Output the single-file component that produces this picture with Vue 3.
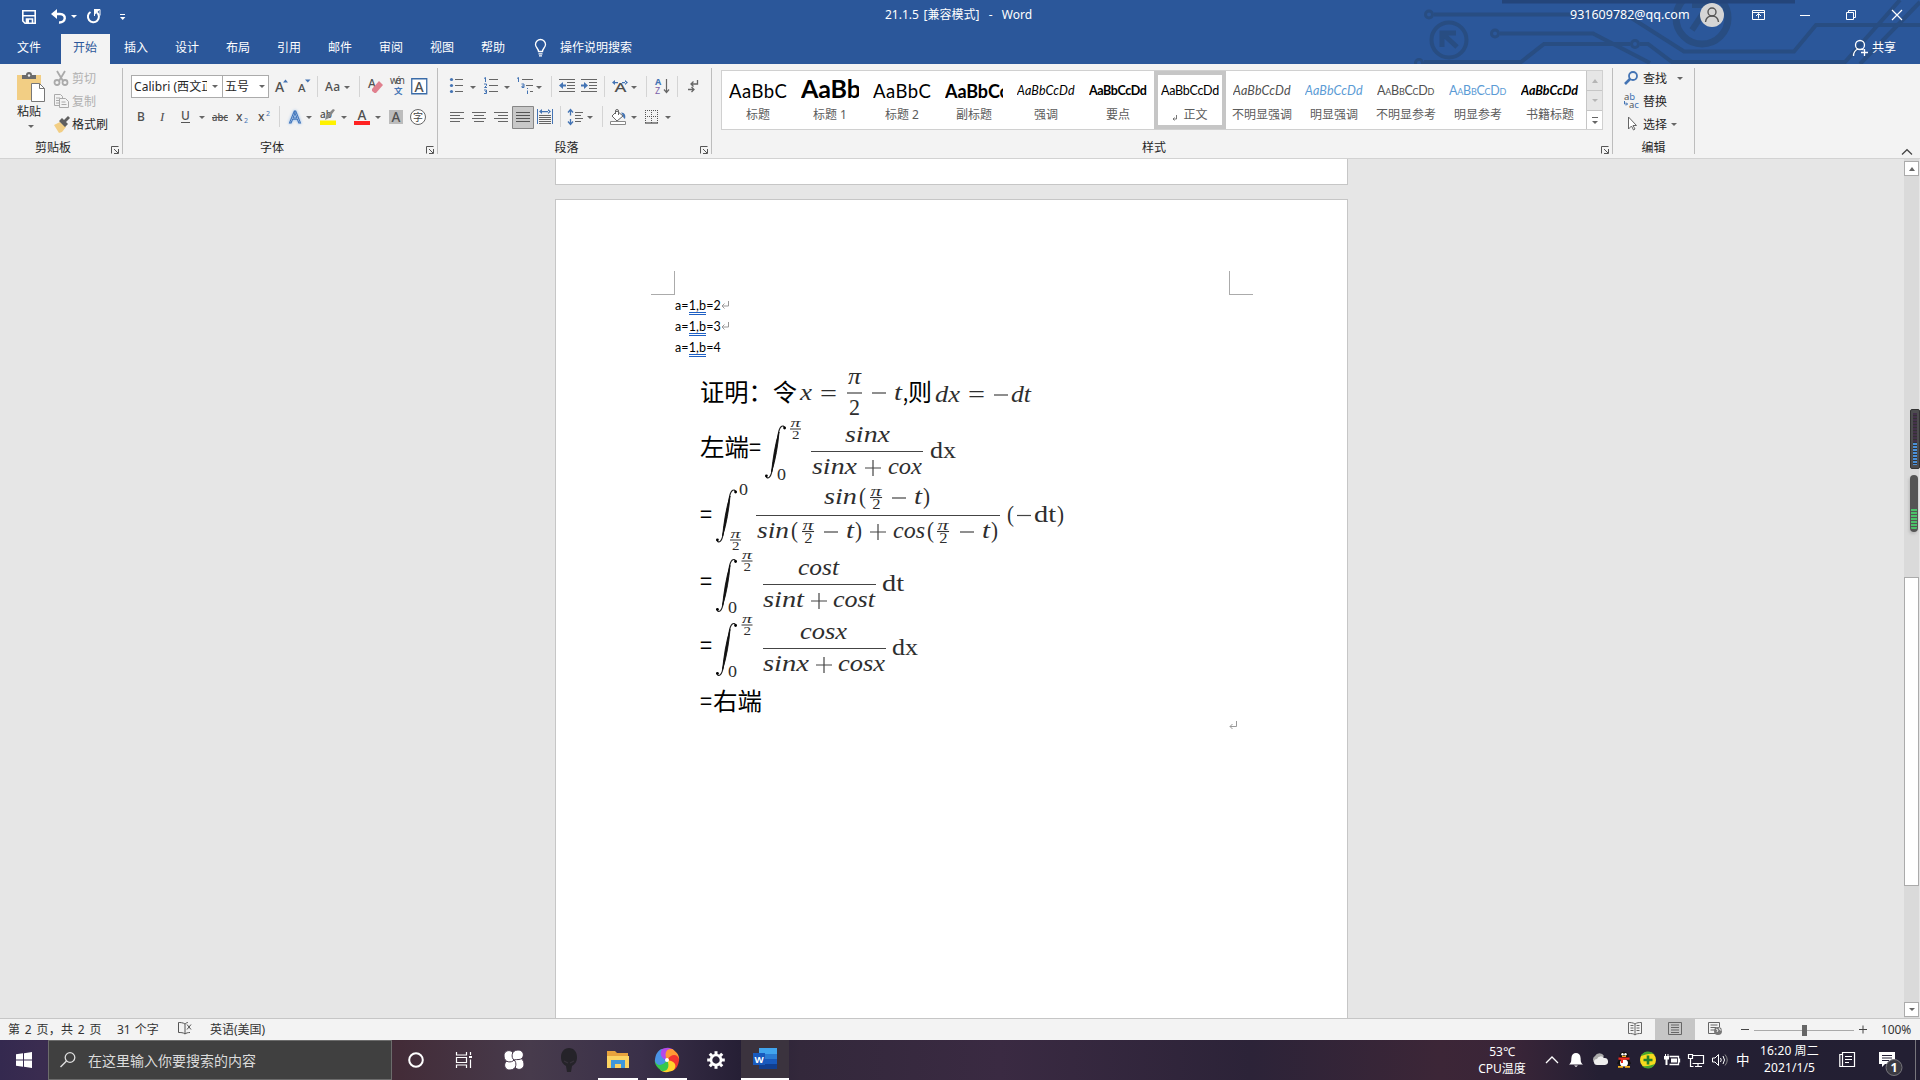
<script setup>
const tabs = ['开始', '插入', '设计', '布局', '引用', '邮件', '审阅', '视图', '帮助']

const styles = [
  { s: 'AaBbC', n: '标题', c: 'lg' },
  { s: 'AaBb', n: '标题 1', c: 'xl b' },
  { s: 'AaBbC', n: '标题 2', c: 'lg' },
  { s: 'AaBbCc', n: '副标题', c: 'lg b' },
  { s: 'AaBbCcDd', n: '强调', c: 'it' },
  { s: 'AaBbCcDd', n: '要点', c: 'b sm' },
  { s: 'AaBbCcDd', n: '正文', c: '', on: true },
  { s: 'AaBbCcDd', n: '不明显强调', c: 'it gray' },
  { s: 'AaBbCcDd', n: '明显强调', c: 'it blue' },
  { s: 'AaBbCcDdE', n: '不明显参考', c: 'caps gray' },
  { s: 'AaBbCcDd', n: '明显参考', c: 'caps blue' },
  { s: 'AaBbCcDd', n: '书籍标题', c: 'it b sm' },
]

const lines = ['2', '3', '4']

// Formula runs: x, baseline, width, text, font class
const runs = [
  [700, 401, 97, '证明：令', 'cj'],
  [800, 400, 12, 'x', 'mi'], [820, 401, 17, '=', 'mr'],
  [848, 384, 13, 'π', 'mi'], [849, 415, 11, '2', 'mr'],
  [894, 400, 8, 't', 'mi'], [903, 401, 5, ',', 'cj'], [908, 401, 24, '则', 'cj'],
  [935, 402, 25, 'dx', 'mi'], [968, 402, 17, '=', 'mr'], [1011, 402, 20, 'dt', 'mi'],
  [700, 456, 49, '左端', 'cj'], [749, 456, 12, '=', 'cj'],
  [777, 480, 9, '0', 'ms'],
  [845, 442, 45, 'sinx', 'mi'], [812, 474, 45, 'sinx', 'mi'], [888, 474, 34, 'cox', 'mi'],
  [930, 458, 26, 'dx', 'mr'],
  [700, 523, 12, '=', 'cj'], [739, 495, 9, '0', 'ms'],
  [824, 504, 33, 'sin', 'mi'], [859, 504, 7, '(', 'mp'], [914, 504, 8, 't', 'mi'], [923, 504, 7, ')', 'mp'],
  [757, 538, 32, 'sin', 'mi'], [791, 538, 7, '(', 'mp'], [846, 538, 8, 't', 'mi'], [855, 538, 7, ')', 'mp'],
  [893, 538, 32, 'cos', 'mi'], [927, 538, 7, '(', 'mp'], [982, 538, 8, 't', 'mi'], [991, 538, 7, ')', 'mp'],
  [1007, 522, 7, '(', 'mp'], [1034, 522, 22, 'dt', 'mr'], [1057, 522, 7, ')', 'mp'],
  [700, 589.5, 12, '=', 'cj'], [728, 613, 9, '0', 'ms'],
  [798, 575, 41, 'cost', 'mi'], [763, 607, 41, 'sint', 'mi'], [833, 607, 42, 'cost', 'mi'],
  [882, 591, 22, 'dt', 'mr'],
  [700, 653.5, 12, '=', 'cj'], [728, 677, 9, '0', 'ms'],
  [800, 639, 47, 'cosx', 'mi'], [763, 671, 46, 'sinx', 'mi'], [838, 671, 47, 'cosx', 'mi'],
  [892, 655, 26, 'dx', 'mr'],
  [700, 710, 12, '=', 'cj'], [713, 710, 49, '右端', 'cj'],
]
// Horizontal strokes: x, y, width
const bars = [
  [847, 393, 15], [872, 393, 14], [994, 395, 14],
  [811, 451.5, 112], [756, 515.5, 244], [763, 584.5, 113], [763, 648.5, 123],
  [892, 498, 14], [824, 532, 14], [960, 532, 14], [1017, 515.5, 14],
]
const pluses = [[873, 468], [878, 532], [819, 601], [824, 665]]
const integrals = [[765, 425], [716, 489], [716, 558.5], [716, 622.5]]
// Small pi/2 fractions: x, bar y, scale
const halves = [
  [790, 429, 1], [730, 540, 1], [741.5, 561, 1], [741.5, 625, 1],
  [870, 497.5, 1.1], [802, 531.5, 1.1], [937, 531.5, 1.1],
]
</script>

<template>
  <div class="screen">
    <header class="top">
      <svg class="circuit" width="520" height="64" fill="none" stroke="#284d82" stroke-width="4">
        <circle cx="29" cy="14.500" r="3.500" stroke-width="3" /><path d="M34 14.500H226L284 51.500H394L416 25H520" />
        <circle cx="49" cy="40" r="17.500" /><path d="M42 47V33H56M43 34l14 13" stroke-width="5" />
        <circle cx="95" cy="33.500" r="3.500" stroke-width="3" /><path d="M100 33.500H193L250 63" />
        <circle cx="19" cy="63" r="3.500" stroke-width="3" /><path d="M24 62H121L144 44H230" />
        <circle cx="235" cy="44" r="3.500" stroke-width="3" /><path d="M240 44H248L272 62H445L500 0M460 64L520 2" />
        <circle cx="302" cy="18" r="26" stroke-width="7" /><path d="M292 5H308V20M308 6l-16 24" stroke-width="6" />
        <path d="M102 1H395" stroke="#24457a" stroke-width="5" />
      </svg>
      <div class="titlebar">
        <div class="qat">
          <svg><path d="M.8 10.800h12.400v12.400H3l-2.200-2.200z" fill="none" stroke="#fff" stroke-width="1.600" /><path d="M1 15.800h12M4.500 23.500V19h6v4.500" fill="none" stroke="#fff" stroke-width="1.600" /><path d="M4 19h3v4H4z" fill="#fff" /></svg>
          <svg><path d="M2 14h7c7 0 6 9-1 8.500" fill="none" stroke="#fff" stroke-width="2.400" /><path d="M0 14l6-5v10z" fill="#fff" /></svg>
          <i class="caret w"></i>
          <svg><path d="M3.500 12a5.500 5.500 0 1 0 6.500.5" fill="none" stroke="#fff" stroke-width="2" /><path d="M7 9.500h6v6M7.500 10v6" fill="none" stroke="#fff" stroke-width="1" /><path d="M7 10h5.500L7 15.500z" fill="#fff" /></svg>
          <svg><path d="M0 14.500h5" stroke="#fff" /><path d="M0 17h5.400L2.700 20z" fill="#fff" /></svg>
        </div>
        <div class="title">21.1.5 [兼容模式]&nbsp; -&nbsp; Word</div>
        <div class="account">
          <span class="mail">931609782@qq.com</span>
          <svg><circle cx="12" cy="15" r="12" fill="#d5d5d5" /><g fill="none" stroke="#555" stroke-width="1.400"><circle cx="12" cy="12" r="4" /><path d="M5.500 22c1-8 12-8 13 0" /></g></svg>
          <svg><path d="M.5 10.500h12v9H.5zM.5 12.500h12M6.500 18.500v-5M4 16l2.500-2.500L9 16" fill="none" stroke="#fff" /></svg>
          <svg><path d="M0 15.500h10" stroke="#fff" /></svg>
          <svg><path d="M.5 12.500h7v7h-7zM2.500 12.500v-2h7v7h-2" fill="none" stroke="#fff" /></svg>
          <svg><path d="M0 10l10 10M10 10L0 20" stroke="#fff" stroke-width="1.200" /></svg>
        </div>
      </div>
      <nav class="tabs">
        <span class="file">文件</span>
        <span v-for="(t, i) in tabs" :key="t" class="tab" :class="{ on: i === 0 }">{{ t }}</span>
        <svg class="bulb"><g fill="none" stroke="#fff" stroke-width="1.300"><path d="M3.500 18.500c0-3-3-4-3-7a5 5 0 0 1 10 0c0 3-3 4-3 7zM3.500 20.800h4M4 22.800h3" /></g></svg>
        <span class="tell">操作说明搜索</span>
        <svg class="shareicon"><g fill="none" stroke="#fff" stroke-width="1.300"><circle cx="7" cy="12" r="4.500" /><path d="M.5 23c0-4 2-6 4.500-7M8.500 16l2 1M8 19.500h7M11.500 16v7" /></g></svg>
        <span class="share">共享</span>
      </nav>
    </header>

    <section class="ribbon">
      <div class="group clip">
        <div class="body cols">
          <div class="paste">
            <svg width="29" height="31"><path d="M0 3h24v25H0z" fill="#f2ce84" /><path d="M5 3h4a3 3 0 0 1 6 0h4v4H5z" fill="#6b6b6b" /><circle cx="12" cy="3.500" r="1.200" fill="#f3f3f3" /><path d="M14.500 11.500h8l5 5v13h-13z" fill="#fff" stroke="#777" /><path d="M22.500 11.500v5h5" fill="none" stroke="#777" /></svg>
            <span>粘贴</span>
            <i class="caret"></i>
          </div>
          <div class="cmds">
            <div class="cmd off"><svg><g fill="none" stroke="#aaa" stroke-width="1.800"><path d="M4 4l6 10M12 4L6 14" /><circle cx="4" cy="15.500" r="2.500" /><circle cx="12" cy="15.500" r="2.500" /></g></svg>剪切</div>
            <div class="cmd off"><svg><g fill="#f3f3f3" stroke="#aaa"><path d="M1.500 4.500h6l2 2v9h-8zM3 8h4M3 10.500h4M3 13h4" /><path d="M6.500 8.500h6l3 3v6h-9zM8.500 12h4M8.500 14.500h5" /></g></svg>复制</div>
            <div class="cmd"><svg><path d="M1 12l6-3 6 5-4 5-3 1z" fill="#f2ce84" /><path d="M6 8l3-3 2 2 4-4 2 2-4 4 2 2-3 3z" fill="#5f5f5f" /></svg>格式刷</div>
          </div>
        </div>
        <div class="foot"><span>剪贴板</span><svg class="launch"><path d="M.5 7.500v-7h7M3 3l4 4M7.500 3v4.500H3" fill="none" stroke="#555" /></svg></div>
      </div>
      <div class="sep"></div>

      <div class="group font">
        <div class="body">
          <div class="row f1">
            <div class="combo"><span>Calibri (西文正</span><i class="caret"></i></div>
            <div class="combo size"><span>五号</span><i class="caret"></i></div>
            <svg><text x="0" y="17" class="ic" font-size="14">A</text><path d="M8 7.500l2.500-3 2.500 3z" fill="#4474b4" /></svg>
            <svg><text x="0" y="17" class="ic" font-size="11.500">A</text><path d="M7 4.500h5.500l-2.700 3z" fill="#4474b4" /></svg>
            <b class="line"></b>
            <svg><text x="0" y="16" class="ic" font-size="12" textLength="15">Aa</text></svg>
            <i class="caret"></i>
            <b class="line"></b>
            <svg><text x="0" y="13" class="ic" font-size="12">A</text><path d="M4 14l7-8 4 4-7 8H6.500l-2.500-2z" fill="#e0808e" /></svg>
            <svg><text x="0" y="9" class="ic n" font-size="10" textLength="15">wén</text><text x="4" y="19" font-size="8.500" fill="#4474b4" font-weight="700">文</text></svg>
            <svg><path d="M.75 3.750h15v15h-15z" fill="#fff" stroke="#3b6ca8" stroke-width="1.300" /><text x="3.500" y="16.500" class="ic" font-size="14">A</text></svg>
          </div>
          <div class="row f2">
            <svg><text x="-1" y="16" class="ic" font-size="12" font-weight="700">B</text></svg>
            <svg><text x="0" y="16" class="ic" font-size="13" font-style="italic" font-family="Liberation Serif" font-weight="700">I</text></svg>
            <svg><text x="0" y="15" class="ic" font-size="12" font-weight="700">U</text><path d="M0 17.500h9" stroke="#555" /></svg>
            <i class="caret"></i>
            <svg><text x="0" y="16" class="ic" font-size="10.500" textLength="16" lengthAdjust="spacingAndGlyphs">abc</text><path d="M0 12.500h16" stroke="#555" /></svg>
            <svg><text x="0" y="16" class="ic" font-size="12" font-weight="700">x</text><text x="8" y="18" font-size="7" fill="#4474b4">2</text></svg>
            <svg><text x="0" y="16" class="ic" font-size="12" font-weight="700">x</text><text x="8" y="11" font-size="7" fill="#4474b4">2</text></svg>
            <b class="line"></b>
            <svg class="glow"><text x="1.500" y="17.500" font-size="16" textLength="11" lengthAdjust="spacingAndGlyphs">A</text></svg>
            <i class="caret"></i>
            <svg><text x="0" y="13" class="ic" font-size="10">ab</text><path d="M15 5l-6 8-4 2 1-4 7-7z" fill="#888" /><path d="M0 15.500h16v4.500H0z" fill="#fff200" /></svg>
            <i class="caret"></i>
            <svg><text x="3.500" y="15" class="ic" font-size="13.500">A</text><path d="M0 16h16v4H0z" fill="#f22" /></svg>
            <i class="caret"></i>
            <svg><path d="M0 5h14v14H0z" fill="#bcbcbc" /><text x="2.500" y="16.500" class="ic" font-size="13.500">A</text></svg>
            <svg><circle cx="8" cy="12" r="7.500" fill="#fff" stroke="#666" /><text x="3" y="15.500" font-size="10" fill="#444">字</text></svg>
          </div>
        </div>
        <div class="foot"><span>字体</span><svg class="launch"><path d="M.5 7.500v-7h7M3 3l4 4M7.500 3v4.500H3" fill="none" stroke="#555" /></svg></div>
      </div>
      <div class="sep"></div>

      <div class="group para">
        <div class="body">
          <div class="row p1">
            <svg><path d="M5 4.500h8M5 10.500h8M5 16.500h8" stroke="#666" /><g fill="#4474b4"><circle cx="1.500" cy="4.500" r="1.600" /><circle cx="1.500" cy="10.500" r="1.600" /><circle cx="1.500" cy="16.500" r="1.600" /></g></svg>
            <i class="caret"></i>
            <svg><path d="M5 4.500h9M5 10.500h9M5 16.500h9" stroke="#666" /><path d="M0 3.500l1.500-1V7M0 9h2.500v1.500L.5 12.500h2.500M0 15h2.500v3.500H0M1 16.700h1.500" fill="none" stroke="#4474b4" /></svg>
            <i class="caret"></i>
            <svg><path d="M5 4.500h11M9 10.500h7M13 16.500h3" stroke="#666" /><path d="M0 3.500l1.500-1V7M4.500 9h2.500v3.500h-2v-1.500h2M10.500 15.500v3.500M10.500 13v1" fill="none" stroke="#4474b4" /></svg>
            <i class="caret"></i>
            <b class="line"></b>
            <svg><path d="M0 4.500h16M8 7.500h8M8 10.500h8M8 13.500h8M0 16.500h16" stroke="#666" /><path d="M0 10.500l4-3.500v2.500h3v2H4V14z" fill="#4474b4" /></svg>
            <svg><path d="M0 4.500h16M8 7.500h8M8 10.500h8M8 13.500h8M0 16.500h16" stroke="#666" /><path d="M7 10.500L3 7v2.500H0v2h3V14z" fill="#4474b4" /></svg>
            <b class="line"></b>
            <svg><text x="2.500" y="17" class="ic" font-size="12" textLength="12" lengthAdjust="spacingAndGlyphs" font-weight="700">A</text><path d="M0 7.500L3 5v5zM16 7.500L13 5v5zM2 7h4v1.200H2zM10 7h4v1.200h-4z" fill="#4474b4" /></svg>
            <i class="caret"></i>
            <b class="line"></b>
            <svg><text y="9.500" font-size="9" font-weight="700" fill="#4474b4">A</text><text y="18.500" font-size="9" fill="#7c5fa8">Z</text><path d="M11.500 4v13M9 14.500l2.500 3 2.500-3" fill="none" stroke="#666" stroke-width="1.200" /></svg>
            <b class="line"></b>
            <svg><path d="M9.500 5v4H3M5.500 6.500L3 9l2.500 2.500M0 14.500h6M3.500 12l2.500 2.500L3.500 17" fill="none" stroke="#666" stroke-width="1.300" /></svg>
          </div>
          <div class="row p2">
            <svg><path d="M0 7.500h14M0 10.500h10M0 13.500h14M0 16.500h10" stroke="#666" /></svg>
            <svg><path d="M0 7.500h14M2 10.500h10M0 13.500h14M2 16.500h10" stroke="#666" /></svg>
            <svg><path d="M0 7.500h14M4 10.500h10M0 13.500h14M4 16.500h10" stroke="#666" /></svg>
            <svg><path d="M.5 1.500h21v22H.5z" fill="#c8c8c8" stroke="#868686" /><path d="M4 7.500h14M4 10.500h14M4 13.500h14M4 16.500h14" stroke="#555" /></svg>
            <svg><path d="M.5 4v15M15.500 4v15" stroke="#4474b4" /><path d="M2 6.500l3-2.500v5zM14 6.500L11 4v5zM4 6h8v1.200H4z" fill="#4474b4" /><path d="M2 10.500h12M2 12.500h12M2 14.500h12M2 16.500h12M2 18.500h12" stroke="#666" /></svg>
            <b class="line"></b>
            <svg><path d="M2.500 5.500v5M2.500 14v5M0 7.500l2.500-3 2.500 3M0 16.500l2.500 3 2.500-3" fill="none" stroke="#4474b4" stroke-width="1.300" /><path d="M7 7.500h8M7 10.500h6M7 13.500h8M7 16.500h6" stroke="#666" /></svg>
            <i class="caret"></i>
            <b class="line"></b>
            <svg><path d="M2 11l5-5 6 5-6 5z" fill="#fff" stroke="#666" /><path d="M5.500 9V6a1.500 1.500 0 0 1 3 0v4" fill="none" stroke="#666" /><path d="M11 7.500c4 0 5 3 4 6.500-1.500-1-2-2-2-3.500z" fill="#4474b4" /><path d="M.5 16.500h15v3H.5z" fill="#fff" stroke="#888" /></svg>
            <i class="caret"></i>
            <svg><path d="M0 5.500h13M0 11.500h13M.5 5v13M6.500 5v13M12.500 5v13" stroke="#555" stroke-dasharray="1 1" /><path d="M0 18h13" stroke="#555" stroke-width="1.300" /></svg>
            <i class="caret"></i>
          </div>
        </div>
        <div class="foot"><span>段落</span><svg class="launch"><path d="M.5 7.500v-7h7M3 3l4 4M7.500 3v4.500H3" fill="none" stroke="#555" /></svg></div>
      </div>
      <div class="sep"></div>

      <div class="group style">
        <div class="body">
          <div class="gallery">
            <div v-for="s in styles" :key="s.n" class="swatch" :class="{ on: s.on }">
              <div class="sample" :class="s.c">{{ s.s }}</div>
              <div class="name"><svg v-if="s.on" class="ret"><path d="M4.500 0v4H1M2.500 2.500L1 4l1.500 1.500" fill="none" stroke="#777" /></svg>{{ s.n }}</div>
            </div>
            <div class="scroller">
              <span><i class="caret up dim"></i></span>
              <span><i class="caret dim"></i></span>
              <span class="more"><i class="caret"></i></span>
            </div>
          </div>
        </div>
        <div class="foot"><span>样式</span><svg class="launch"><path d="M.5 7.500v-7h7M3 3l4 4M7.500 3v4.500H3" fill="none" stroke="#555" /></svg></div>
      </div>
      <div class="sep"></div>

      <div class="group edit">
        <div class="body">
          <div class="cmd"><svg><circle cx="9" cy="9" r="4" fill="none" stroke="#4474b4" stroke-width="1.800" /><path d="M6 12l-5 5" stroke="#4474b4" stroke-width="2.600" /></svg>查找<i class="caret far"></i></div>
          <div class="cmd"><svg><text x="0" y="9.500" font-size="9.500" fill="#555">a<tspan fill="#4474b4">b</tspan></text><text x="5" y="17.500" font-size="9.500" fill="#555">a<tspan fill="#4474b4">c</tspan></text><path d="M.5 11v3h3M2 12.500L3.500 14 2 15.500" fill="none" stroke="#4474b4" /></svg>替换</div>
          <div class="cmd"><svg><path d="M4.500 4v12l3-3 2 4 1.500-1-2-3.500h3.500z" fill="#fff" stroke="#666" /></svg>选择<i class="caret near"></i></div>
        </div>
        <div class="foot"><span>编辑</span></div>
      </div>
      <div class="sep"></div>
      <svg class="fold"><path d="M0 5.500L5 .7l5 4.800" fill="none" stroke="#444" stroke-width="1.200" /></svg>
    </section>

    <main class="canvas">
      <div class="gutter"></div>
      <div class="pages">
        <div class="page prev"></div>
        <div class="page cur">
          <div class="marks"><i class="ml"></i><i class="mr2"></i></div>
          <p v-for="n in lines" :key="n" class="para-line">
            a=<u>1,b</u>={{ n }}<svg v-if="n !== '4'" width="8" height="8"><path d="M7.500 0v5H1M3.500 2.500L1 5l2.500 2.500" fill="none" stroke="#999" /></svg>
          </p>
          <div class="figure">
            <svg width="520" height="360" viewBox="690 364 520 360">
              <text v-for="(r, i) in runs" :key="i" :x="r[0]" :y="r[1]" :textLength="r[2]" lengthAdjust="spacingAndGlyphs" :class="r[4]">{{ r[3] }}</text>
              <g stroke="#444" stroke-width="1.200">
                <path v-for="(b, i) in bars" :key="i" :d="`M${b[0]} ${b[1]}h${b[2]}`" />
                <path v-for="(p, i) in pluses" :key="'p' + i" :d="`M${p[0] - 8} ${p[1]}h16M${p[0]} ${p[1] - 8}v16`" />
              </g>
              <g v-for="(n, i) in integrals" :key="'n' + i" :transform="`translate(${n[0]} ${n[1]})`">
                <path d="M20 3C18-1 14.500 1 13.300 9L7.300 44C6 53 2.500 55 .8 51" fill="none" stroke="#222" stroke-width="1.200" />
                <path d="M14 7C13 20 10.500 35 6.600 47C8 33 10 20 14 7z" fill="#111" stroke="#111" stroke-width=".9" />
                <circle cx="19.600" cy="3" r="1.400" /><circle cx="1.400" cy="50.800" r="1.400" />
              </g>
              <g v-for="(h, i) in halves" :key="'h' + i" :transform="`translate(${h[0]} ${h[1]}) scale(${h[2]})`">
                <text x="0.500" y="-1.800" class="mh" textLength="10" lengthAdjust="spacingAndGlyphs">π</text>
                <path d="M0 0h11" stroke="#333" />
                <text x="2" y="10" class="m2" textLength="7.500" lengthAdjust="spacingAndGlyphs">2</text>
              </g>
            </svg>
            <svg class="endmark" width="9" height="9"><path d="M7.500 0v5.500H1M3.500 3L1 5.500 3.500 8" fill="none" stroke="#999" /></svg>
          </div>
        </div>
      </div>
      <div class="vscroll">
        <span class="btn"><i class="caret up"></i></span>
        <span class="thumb"></span>
        <span class="btn"><i class="caret"></i></span>
      </div>
      <div class="meter dark"><i></i></div>
      <div class="meter green"><i></i></div>
    </main>

    <footer class="status">
      <span class="pg">第 2 页，共 2 页</span>
      <span class="wc">31 个字</span>
      <svg class="proof"><path d="M7 5C5 3.500 2 3.500.5 3.500v10c2 0 5 0 6.500 1.500V5c1-1 2-1.500 3-1.500M7 15c1-1 3-1.500 5-1.500M9 5.500l4 5M13 5.500l-4 5" fill="none" stroke="#555" /></svg>
      <span class="lang">英语(美国)</span>
      <svg class="v1"><path d="M7 5C5 3.500 2 3.500.5 3.500v11c3 0 5 0 6.500 1.500V5c2-1.500 4-1.500 6.500-1.500v11c-3 0-5 0-6.500 1.500M2.500 6.500h3M2.500 9h3M2.500 11.500h3M8.500 6.500h3M8.500 9h3M8.500 11.500h3" fill="none" stroke="#666" /></svg>
      <span class="v2"><svg><path d="M.5 3.500h13v12H.5zM3 6h8M3 8.500h8M3 11h8M3 13.500h8" fill="none" stroke="#666" /></svg></span>
      <svg class="v3"><path d="M7 14.500H.5v-11h11V8M2.500 6h7M2.500 8.500h6M2.500 11h4" fill="none" stroke="#666" /><circle cx="10" cy="12" r="4" fill="#777" /><path d="M8 10l2 1-1 2M11 9l1 2 1.500 0" stroke="#eee" fill="none" /></svg>
      <svg class="zoom"><path d="M0 10.500h8M118 10.500h8M122 6.500v8" stroke="#444" /><path d="M13 11.500h100" stroke="#aaa" /><path d="M61 6h5v11h-5z" fill="#666" /></svg>
      <span class="pct">100%</span>
    </footer>

    <footer class="taskbar">
      <div class="start"><svg width="16" height="16" fill="#fff"><path d="M0 2.300L7 1.300v6.200H0zM8 1.200L16 0v7.500H8zM0 8.500h7v6.200l-7-1zM8 8.500h8V16l-8-1.200z" /></svg></div>
      <div class="search"><svg width="16" height="16"><circle cx="10" cy="5.500" r="4.800" fill="none" stroke="#ddd" stroke-width="1.300" /><path d="M6.500 9L.5 15" stroke="#ddd" stroke-width="1.400" /></svg><span>在这里输入你要搜索的内容</span></div>
      <div class="apps">
        <span><svg width="16" height="16"><circle cx="8" cy="8" r="6.800" fill="none" stroke="#fff" stroke-width="2" /></svg></span>
        <span><svg width="16" height="16"><path d="M.5 0v3h10V0M.5 5.500h10v5H.5zM.5 16v-3h10v3M14.500 0v3M14.500 7.500V16" fill="none" stroke="#fff" stroke-width="1.200" /><path d="M13 4h3v2h-3z" fill="#fff" /></svg></span>
        <span><svg width="22" height="22" viewBox="-11 -11 22 22"><path v-for="i in 4" :key="i" d="M0 0C-3-2-3-10 4-10C11-10 11-1 5-.5C3-.3 1.500-.5 0 0z" fill="#fff" stroke="#46374a" :transform="`rotate(${i * 90})`" /></svg></span>
        <span><svg width="16" height="24"><path d="M8 0c5 0 8 4 8 9s-2 7-5 9l-1 6H6l-1-6c-3-2-5-4-5-9s3-9 8-9z" fill="#252329" /><path d="M3 13l4 2M13 13l-4 2" stroke="#38323c" stroke-width="1.300" /></svg></span>
        <span class="open"><svg width="22" height="20"><path d="M0 1h8l2 2h11v15H0z" fill="#e8a33d" /><path d="M0 6h22v12H0z" fill="#fcd462" /><path d="M4 18v-8h14v8h-4v-4H8v4z" fill="#3e97dc" /></svg></span>
        <span class="open gap"><svg width="24" height="24" viewBox="-12 -12 24 24"><path v-for="(c, i) in ['#b34ae8', '#ff9a35', '#f2352f', '#ffd42c', '#37c84c', '#4a93e6']" :key="c" d="M0 0C-7-3-8-9-3-11.700C3-12.500 8-11 10-6.500C5-9 0-6 0 0z" :fill="c" :transform="`rotate(${i * 60 - 20})`" /><circle r="2" fill="#fff" /></svg></span>
        <span class="gap"><svg width="18" height="18" viewBox="-9 -9 18 18"><circle r="5" fill="none" stroke="#fff" stroke-width="2.600" /><path v-for="i in 8" :key="i" d="M-1.500-8.800h3v3h-3z" fill="#fff" :transform="`rotate(${i * 45})`" /></svg></span>
        <span class="word"><svg width="24" height="22"><path d="M6 0h18v6H6z" fill="#41a5ee" /><path d="M6 6h18v5H6z" fill="#2b7cd3" /><path d="M6 11h18v5H6z" fill="#185abd" /><path d="M6 16h18v5H6z" fill="#103f91" /><path d="M0 5h12v12H0z" fill="#185abd" /><text x="1.500" y="14.500" font-size="9.500" font-weight="700" fill="#fff">W</text></svg></span>
      </div>
      <div class="temp"><span>53℃</span><span>CPU温度</span></div>
      <div class="tray">
        <svg><path d="M0 23l6-6 6 6" fill="none" stroke="#fff" stroke-width="1.300" /></svg>
        <svg><path d="M0 24.500c3-2 2-5 2.500-7a4.500 4.500 0 0 1 9 0c.5 2-.5 5 2.500 7z" fill="#fff" /><path d="M5 25.500h4l-2 1.500z" fill="#fff" /></svg>
        <svg><path d="M3 23a4 4 0 0 1 0-7 5 5 0 0 1 9 0l-6 7z" fill="#aaa" /><path d="M5 25a3 3 0 0 1 0-6 4 4 0 0 1 7-1 3.500 3.500 0 0 1 1 7z" fill="#eee" /></svg>
        <svg><path d="M3.500 15.500c0-5 9-5 9 0v3l2.500 5-2 1-1 2H4l-1-2-2-1 2.500-5z" fill="#111" /><ellipse cx="8" cy="23" rx="4" ry="3.500" fill="#fff" /><path d="M2.500 17.500h11v2.200H7V23H5v-3.300H2.500z" fill="#ed2a20" /><path d="M2 26h5v1.800H2zM9 26h5v1.800H9zM6 15.800h4v1.200H6z" fill="#f7b41c" /><circle cx="6.500" cy="14.300" r="1.200" fill="#fff" /><circle cx="9.500" cy="14.300" r="1.200" fill="#fff" /></svg>
        <svg><circle cx="8" cy="20" r="8" fill="#f6db1e" /><path d="M1 16a8 8 0 0 1 13-2c-5-1-9 1-13 2zM15 24a8 8 0 0 1-13 2c5 1 9-1 13-2z" fill="#46a42f" /><path d="M8 15.500v9M3.500 20h9" stroke="#23812d" stroke-width="2.600" /></svg>
        <svg><path d="M5.500 16.500h9v8h-9M15.500 18.500v4" fill="none" stroke="#fff" stroke-width="1.300" /><path d="M7 18.500h6v4H7zM0 16h5v3.500H3.500V25h-2v-5.500H0zM1 14h1v3H1zM3.500 14h1v3h-1z" fill="#fff" /></svg>
        <svg><path d="M4.500 15.500h11v8h-11M10 24v3M7 26.500h7M.5 14.500h4v4h-4zM2.500 18.500v8h3" fill="none" stroke="#fff" stroke-width="1.200" /></svg>
        <svg><path d="M.5 18h2.500l3.500-3.500v11L3 22H.5z" fill="none" stroke="#fff" /><path d="M8.500 18q1.500 2 0 4M11 16q3 4 0 8" fill="none" stroke="#fff" /><path d="M13 14.500q4.500 5.500 0 11" fill="none" stroke="#888" /></svg>
        <span class="ime">中</span>
      </div>
      <div class="clock"><span>16:20 周二</span><span>2021/1/5</span></div>
      <svg class="note"><path d="M3.500 12.500h12v14h-12zM3 14.500H.8v12H4M6 16.500h7M6 19.500h7M6 22.500h4" fill="none" stroke="#fff" stroke-width="1.200" /></svg>
      <svg class="action"><path d="M0 12h16v12H6l-3 3v-3H0z" fill="#fff" /><path d="M3 15.500h10M3 18h10M3 20.500h7" stroke="#242036" /><circle cx="15" cy="27.500" r="8" fill="#3b3a42" stroke="#77757c" /><text x="11.500" y="32" font-size="12.500" font-weight="700" fill="#fff">1</text></svg>
      <div class="peek"></div>
    </footer>
  </div>
</template>

<style>
body { margin: 0; overflow: hidden; }
</style>

<style scoped>
* { box-sizing: border-box; }
.screen { width: 1920px; height: 1080px; display: flex; flex-direction: column; overflow: hidden; font: 12px/16px "Noto Sans", "Noto Sans CJK SC", sans-serif; color: #262626; background: #e6e6e6; }
svg { display: block; overflow: visible; flex: none; }
i, b { display: block; }
.caret { width: 0; height: 0; border: 3px solid transparent; border-top-color: #666; border-bottom: 0; }
.caret.up { border-top: 0; border-bottom: 4px solid #666; }
.caret.w { border-top-color: #fff; }
.caret.dim { border-top-color: #b5b5b5; }
.caret.up.dim { border-bottom-color: #b5b5b5; }

.top { position: relative; height: 64px; background: #2b579a; color: #fff; flex: none; }
.circuit { position: absolute; left: 1400px; top: 0; overflow: hidden; }
.titlebar { position: relative; display: grid; grid-template-columns: 885px 685px 350px; height: 34px; }
.qat { display: grid; grid-template-columns: 29px 20px 16px 33px 6px; padding-left: 22px; }
.qat svg, .account svg { width: 100%; height: 32px; }
.qat .caret { margin-top: 15px; }
.title { line-height: 30px; white-space: nowrap; word-spacing: 1.500px; }
.account { display: grid; grid-template-columns: 130px 52px 48px 46px 46px 28px; }
.mail { line-height: 30px; font-size: 12.500px; white-space: nowrap; }
.tabs { position: relative; display: flex; height: 30px; line-height: 28px; }
.file { width: 61px; padding-left: 17px; }
.tab { width: 49px; margin-right: 2px; padding-right: 1px; text-align: center; }
.tab.on { background: #f3f3f3; color: #2b579a; }
.bulb { width: 25px; height: 30px; margin: -1px 0 0 15px; }
.tell { width: 1293px; }
.shareicon { width: 19px; height: 30px; margin-top: -1px; }

.ribbon { display: flex; height: 95px; background: #f3f3f3; border-bottom: 1px solid #d2d2d2; flex: none; }
.sep { width: 1px; height: 86px; margin-top: 4px; background: #bdbdbd; }
.group { display: flex; flex-direction: column; }
.body { height: 75px; }
.foot { display: flex; text-align: center; }
.foot span { flex: 1; line-height: 18px; padding-right: 5px; }
.edit .foot span { padding-right: 0; }
.launch { width: 11px; height: 8px; margin: 7px 0 0; }
.clip { width: 122px; }
.cols { display: flex; }
.paste { width: 53px; padding: 8px 0 0 17px; }
.paste span { display: block; margin: 1px 0 0; }
.paste .caret { margin: 5px 0 0 11px; }
.cmds { padding-top: 3px; }
.cmd { display: flex; height: 23px; line-height: 24px; white-space: nowrap; }
.cmd svg { width: 19px; height: 23px; }
.cmd.off { color: #b1b1b1; }
.font { width: 314px; }
.font .body { padding: 11px 0 0 8px; }
.row { display: grid; height: 24px; margin-bottom: 6px; }
.row svg { width: 100%; height: 24px; }
.row .caret { margin: 11px 0 0 -1px; }
.f1 { grid-template-columns: 92px 52px 23px 19px 8px 20px 14px 9px 22px 21px 17px; }
.f2 { grid-template-columns: 22px 21px 19px 12px 24px 22px 21px 9px 19px 13px 22px 12px 22px 13px 21px 17px; margin-left: 7px; }
.ic { fill: #505050; font-weight: 500; }
.ic.n { font-weight: 400; }
.glow text { fill: #fff; stroke: #3f74bb; stroke-width: 1px; filter: drop-shadow(0 0 1.500px #8db8ea); }
.line { width: 1px; height: 21px; margin-top: 1px; background: #d4d4d4; }
.combo { display: flex; height: 23px; border: 1px solid #ababab; background: #fff; line-height: 21px; padding-left: 2px; }
.combo span { width: 73px; overflow: hidden; white-space: nowrap; letter-spacing: .05px; }
.row .combo .caret { margin: 9px 0 0 5px; }
.size { width: 46px; border-left: 0; padding-left: 2px; }
.size span { width: 29px; }
.para { width: 273px; }
.para .body { padding: 11px 0 0 12px; }
.p1 { grid-template-columns: 21px 13px 21px 12px 20px 14px 8px 22px 23px 8px 20px 14px 9px 22px 11px 11px; }
.p2 { grid-template-columns: 22px 22px 18px 25px 23px 8px 20px 14px 8px 22px 13px 21px 6px; }
.style { width: 900px; }
.style .body { padding: 6px 0 0 9px; }
.gallery { display: flex; width: 882px; height: 60px; background: #fff; border: 1px solid #d0d0d0; }
.swatch { width: 72px; padding: 0 7px; }
.swatch.on { box-shadow: inset 0 0 0 4px #c6c6c6; }
.sample { height: 35px; line-height: 40px; font-family: Lato, sans-serif; font-size: 12.500px; letter-spacing: -.25px; color: #000; overflow: hidden; white-space: nowrap; }
.sample.lg { font-size: 18.500px; line-height: 41px; letter-spacing: .45px; margin-right: -2px; }
.sample.lg.b { font-size: 18px; letter-spacing: -.1px; margin-right: 0; }
.sample.xl { font-size: 25px; line-height: 35px; letter-spacing: -.1px; }
.sample.b { font-weight: 700; }
.sample.sm { letter-spacing: -.4px; }
.sample.it { font-style: italic; letter-spacing: .15px; }
.sample.it.b { letter-spacing: -.05px; }
.sample.gray { color: #505050; }
.sample.blue { color: #5b9bd5; }
.sample.caps { font-variant: small-caps; letter-spacing: -.25px; }
.name { display: flex; justify-content: center; color: #5c5c5c; line-height: 18px; white-space: nowrap; margin: 0 -6px; }
.ret { width: 11px; height: 6px; margin-top: 9px; }
.scroller { display: flex; flex-direction: column; width: 16px; }
.scroller span { display: flex; align-items: center; justify-content: center; height: 20px; border-left: 1px solid #c6c6c6; border-bottom: 1px solid #c6c6c6; background: #e6e6e6; }
.scroller .more { height: 18px; border-bottom: 0; background: #fff; }
.more .caret { position: relative; top: 2px; }
.more .caret::before { content: ""; position: absolute; left: -3px; top: -7px; width: 6px; height: 1px; background: #666; }
.edit { width: 81px; }
.edit .body { padding: 3px 0 0 11px; }
.far { margin: 10px 0 0 10px; }
.near { margin: 10px 0 0 4px; }
.fold { width: 10px; height: 6px; margin: 85px 0 0 207px; }

.canvas { position: relative; display: flex; height: 859px; overflow: hidden; flex: none; }
.gutter { width: 555px; }
.pages { width: 1349px; }
.page { width: 793px; background: #fff; border: 1px solid #c6c6c6; }
.prev { height: 26px; border-top: 0; }
.cur { margin-top: 14px; height: 840px; }
.marks { display: flex; justify-content: space-between; width: 602px; height: 24px; margin: 71px 0 0 95px; }
.marks i { width: 24px; height: 24px; border: solid #ababab; border-width: 0 1px 1px 0; }
.marks .mr2 { border-width: 0 0 1px 1px; }
.para-line { display: flex; height: 21px; margin: 0 0 0 119px; font-family: Lato, "Open Sans", sans-serif; font-size: 12.500px; letter-spacing: .12px; line-height: 22px; color: #000; }
.para-line u { text-decoration: none; height: 20px; border-bottom: 3px double #1d5fc4; line-height: 22px; }
.para-line svg { margin: 6px 0 0; }
.figure { display: flex; margin: 6px 0 0 134px; }
.figure text { fill: #2e2e2e; }
.endmark { margin: 357px 0 0 19px; }
.figure .cj { font: 24px "Noto Sans CJK SC", sans-serif; fill: #000; }
.figure .mi { font: italic 22.500px "Liberation Serif", serif; }
.figure .mr { font: 23px "Liberation Serif", serif; }
.figure .ms { font: 17px "Liberation Serif", serif; }
.figure .mp { font: 24px "Liberation Serif", serif; }
.figure .mh { font: italic 13px "Liberation Serif", serif; }
.figure .m2 { font: 12.500px "Liberation Serif", serif; }
.vscroll { display: flex; flex-direction: column; width: 15px; padding: 2px 0 1px; background: #dadada; }
.btn { display: flex; align-items: center; justify-content: center; height: 15px; background: #fff; border: 1px solid #ababab; flex: none; }
.thumb { height: 309px; margin: 401px 0 116px; background: #fff; border: 1px solid #ababab; flex: none; }
.meter { position: absolute; }
.dark { left: 1910px; top: 250px; width: 10px; height: 60px; background: #4d4d4f; border: 1px solid #333; border-radius: 2px; padding: 3px 0 0 2px; }
.dark i { width: 4px; height: 52px; background: repeating-linear-gradient(#0000 0 2px, #333 2px 3px), linear-gradient(#44324a 0 30px, #4a90d9 30px); }
.green { left: 1910px; top: 316px; width: 8px; height: 57px; background: #555; border-radius: 4px; box-shadow: -1px 2px 3px #bbb; padding: 34px 1px 0; }
.green i { height: 21px; background: repeating-linear-gradient(#4bc16a 0 2px, #555 2px 3px); border-radius: 0 0 3px 3px; }

.status { display: flex; height: 22px; background: #f3f3f3; border-top: 1px solid #c6c6c6; line-height: 21px; white-space: nowrap; flex: none; color: #333; }
.status svg { height: 21px; }
.pg { width: 117px; padding-left: 8px; word-spacing: 1.200px; letter-spacing: .25px; }
.wc { width: 61px; word-spacing: 1px; }
.proof { width: 32px; }
.lang { width: 1418px; }
.v1 { width: 27px; }
.v2 { width: 40px; height: 21px; padding-left: 13px; background: #c6c6c6; }
.v3 { width: 33px; margin-left: 13px; }
.zoom { width: 140px; }
.pct { letter-spacing: -.1px; }

.taskbar { display: flex; height: 40px; color: #fff; white-space: nowrap; flex: none; background: linear-gradient(90deg, #34294f 0, #3a2c50 40px, #432c38 400px, #473b4c 530px, #3a3049 640px, #261f35 740px, #33283b 800px, #3a2a42 1000px, #2c2338 1250px, #3c2637 1440px, #3a2538 1510px, #241f33 1600px, #231f33); }
.start { display: flex; align-items: center; width: 48px; padding-left: 16px; }
.search { display: flex; align-items: center; width: 344px; padding-left: 11px; border: 1px solid #6c6c6c; background: #404040; color: #dcdcdc; font-size: 14px; }
.search span { margin: 2px 0 0 12px; }
.apps { display: grid; grid-template-columns: 48px 48px 52px 58px 40px 49px 49px 53px; width: 1086px; }
.apps span { display: flex; align-items: center; justify-content: center; }
.apps .gap { margin-left: 9px; }
.apps .open { border-bottom: 2px solid #fff; padding-top: 1px; }
.apps .word { margin-left: 5px; background: #3b333e; border-bottom: 2px solid #fff; }
.temp, .clock { display: flex; flex-direction: column; text-align: center; padding-top: 3px; line-height: 17px; }
.temp { width: 48px; }
.tray { display: grid; grid-template-columns: 23px 23px 24px 24px 24px 24px 24px 24px 24px; margin-left: 20px; }
.tray svg { width: 100%; height: 40px; }
.ime { font-size: 13.500px; line-height: 40px; }
.clock { width: 60px; padding-top: 2px; }
.clock span { margin: 0 -1px 0 -2px; letter-spacing: .12px; }
.note { width: 40px; height: 40px; margin-left: 19px; }
.action { width: 36px; height: 40px; }
.peek { width: 1px; background: #77757c; }
</style>
